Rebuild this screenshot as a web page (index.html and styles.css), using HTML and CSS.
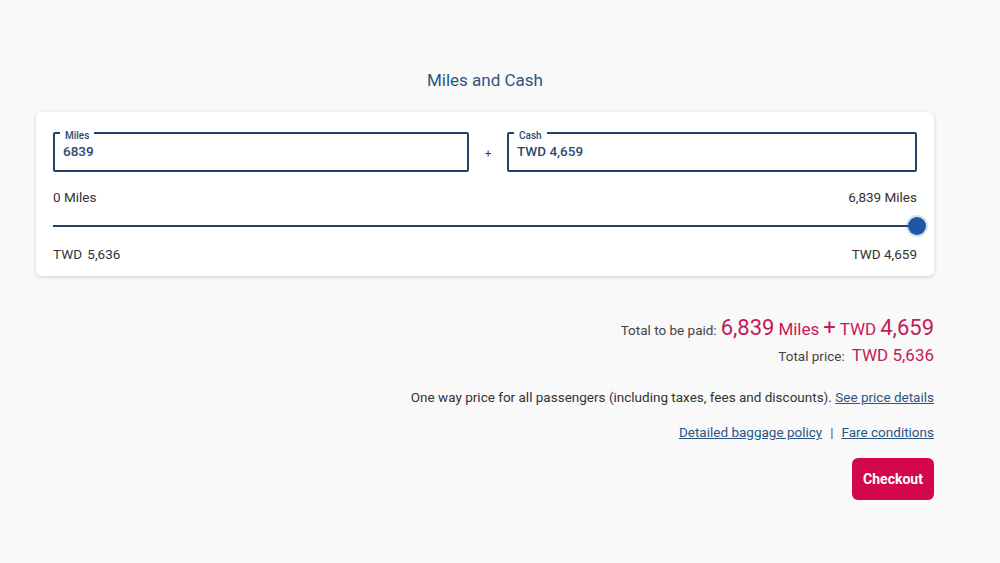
FILE: index.html
```html
<!DOCTYPE html>
<html>
<head>
<meta charset="utf-8">
<link rel="stylesheet" href="styles.css">
</head>
<body>
<div class="wrap">
  <h1 class="title">Miles and Cash</h1>
  <div class="card">
    <div class="fields">
      <div class="field">
        <span class="field-label">Miles</span>
        <span class="field-value">6839</span>
      </div>
      <div class="plus">+</div>
      <div class="field">
        <span class="field-label">Cash</span>
        <span class="field-value">TWD 4,659</span>
      </div>
    </div>
    <div class="range-row top">
      <span>0 Miles</span>
      <span>6,839 Miles</span>
    </div>
    <div class="slider">
      <div class="track"></div>
      <div class="thumb"></div>
    </div>
    <div class="range-row bottom">
      <span class="wide">TWD 5,636</span>
      <span>TWD 4,659</span>
    </div>
  </div>

  <div class="summary">
    <div class="total-line">
      <span class="lbl">Total to be paid:</span>
      <span class="amt big">6,839</span>
      <span class="amt mid">Miles</span>
      <span class="amt big">+</span>
      <span class="amt mid">TWD</span>
      <span class="amt big">4,659</span>
    </div>
    <div class="price-line">
      <span class="lbl">Total price:</span>
      <span class="amt mid2">TWD 5,636</span>
    </div>
    <p class="note">One way price for all passengers (including taxes, fees and discounts). <a href="#" class="link">See price details</a></p>
    <p class="links"><a href="#" class="link">Detailed baggage policy</a><span class="sep">|</span><a href="#" class="link">Fare conditions</a></p>
    <div class="actions">
      <button class="checkout">Checkout</button>
    </div>
  </div>
</div>
</body>
</html>
```

FILE: styles.css
```css
* { box-sizing: border-box; }
html, body {
  margin: 0;
  padding: 0;
  background: #f9f9f9;
  font-family: Roboto, "Liberation Sans", Arial, sans-serif;
  color: #333;
}
.wrap {
  width: 898px;
  margin-left: 36px;
  padding-top: 70px;
}
.title {
  margin: 0 0 22px;
  font-size: 17px;
  line-height: 20px;
  font-weight: 400;
  text-align: center;
  color: #2c5585;
}
.card {
  background: #fff;
  border-radius: 6px;
  box-shadow: 0 1px 4px rgba(0,0,0,0.16);
  padding: 20px 17px 13px;
}
.fields {
  display: grid;
  grid-template-columns: 416px 38px 1fr;
  align-items: center;
}
.field {
  position: relative;
  height: 40px;
  border: 2px solid #23426b;
  border-radius: 2px;
  display: flex;
  align-items: center;
  padding-left: 8px;
}
.field-label {
  position: absolute;
  left: 5px;
  top: -4px;
  padding: 0 5px;
  background: #fff;
  font-size: 10px;
  line-height: 12px;
  font-weight: 500;
  color: #2a4a70;
}
.field-value {
  font-size: 13.5px;
  font-weight: 500;
  color: #2a4a70;
  margin-top: -3px;
}
.plus {
  text-align: center;
  font-size: 11px;
  color: #333;
  padding-top: 2px;
}
.range-row {
  display: flex;
  justify-content: space-between;
  font-size: 13.5px;
  line-height: 18px;
  color: #333;
}
.range-row.top { margin-top: 16px; }
.range-row.bottom { margin-top: 9px; }
.wide { word-spacing: 2px; }
.slider {
  position: relative;
  height: 20px;
  margin-top: 10px;
  display: flex;
  align-items: center;
}
.track {
  width: 100%;
  height: 2px;
  background: #23426b;
}
.thumb {
  position: absolute;
  right: -9px;
  top: 1px;
  width: 18px;
  height: 18px;
  border-radius: 50%;
  background: #2057a3;
  box-shadow: 0 0 0 2px rgba(32,87,163,0.18);
}
.summary {
  text-align: right;
  margin-top: 39px;
}
.total-line {
  line-height: 26px;
}
.lbl {
  font-size: 13.5px;
  color: #444;
}
.amt { color: #c41a5b; }
.big { font-size: 22px; }
.mid { font-size: 17px; }
.mid2 { font-size: 17px; margin-left: 3px; }
.price-line {
  margin-top: 1px;
  line-height: 22px;
}
.note {
  margin: 21px 0 0;
  font-size: 13.5px;
  line-height: 18px;
  color: #333;
}
.link {
  color: #2c5585;
  text-decoration: underline;
}
.links {
  margin: 17px 0 0;
  font-size: 13.5px;
  line-height: 18px;
}
.sep {
  margin: 0 8px;
  color: #555;
}
.actions {
  display: flex;
  justify-content: flex-end;
  margin-top: 17px;
}
.checkout {
  width: 82px;
  height: 42px;
  border: none;
  border-radius: 6px;
  background: #d3084c;
  color: #fff;
  font-family: Roboto, "Liberation Sans", Arial, sans-serif;
  font-size: 14px;
  font-weight: 700;
  padding: 0;
}
```
